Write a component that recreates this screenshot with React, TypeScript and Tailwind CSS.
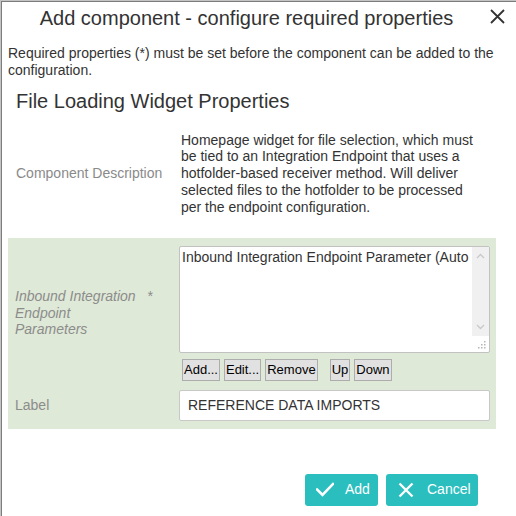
import React from "react";

function CloseIcon() {
  return (
    <svg width="15" height="15" viewBox="0 0 15 15">
      <path d="M1 1 L14 14 M14 1 L1 14" stroke="#333" strokeWidth="1.8" fill="none" />
    </svg>
  );
}

function CheckIcon() {
  return (
    <svg width="18" height="15" viewBox="0 0 18 15">
      <path d="M1 7.5 L6.5 13 L17 2" stroke="#fff" strokeWidth="2.6" fill="none" strokeLinecap="square" />
    </svg>
  );
}

function XIcon() {
  return (
    <svg width="16" height="16" viewBox="0 0 16 16">
      <path d="M1.5 1.5 L14.5 14.5 M14.5 1.5 L1.5 14.5" stroke="#fff" strokeWidth="2.4" fill="none" />
    </svg>
  );
}

function SmallBtn({ children, className = "" }: { children: React.ReactNode; className?: string }) {
  return (
    <button
      className={`h-[22px] px-[1px] border border-[#adadad] bg-[#e1e1e1] text-[13px] leading-[16px] text-black font-['Liberation_Sans'] ${className}`}
    >
      {children}
    </button>
  );
}

export default function App() {
  return (
    <div className="relative w-[516px] h-[516px] bg-white font-['Liberation_Sans'] text-[#333] shadow-[inset_1px_1px_0_#c4c4c4,inset_2px_2px_0_#7d7d7d] overflow-hidden">
      {/* Header */}
      <div className="pt-[7px] w-[493px] text-center text-[20px] leading-[23px] text-[#333]">
        Add component - configure required properties
      </div>
      <button className="absolute left-[490px] top-[9px]">
        <CloseIcon />
      </button>

      <p className="mt-[15px] px-[8px] text-[14px] leading-[16.8px]">
        Required properties (*) must be set before the component can be added to the configuration.
      </p>

      <h2 className="mt-[11px] px-[16px] text-[20px] leading-[23px]">File Loading Widget Properties</h2>

      <div className="w-[496px] pl-[8px]">
        {/* Description row */}
        <div className="flex pt-[19px] pb-[22px]">
          <div className="w-[171px] shrink-0 pl-[8px] flex items-center text-[14px] leading-[16.8px] text-[#8a8a8a]">
            Component Description
          </div>
          <div className="w-[298px] shrink-0 pl-[2px] text-[14px] leading-[16.8px] text-[#333]">
            Homepage widget for file selection, which must be tied to an Integration Endpoint that uses a
            hotfolder-based receiver method. Will deliver selected files to the hotfolder to be processed per the
            endpoint configuration.
          </div>
        </div>

        {/* Required panel */}
        <div className="bg-[#dfe9d7] pt-[8px] pb-[8px]">
          <div className="flex">
            <div className="w-[171px] shrink-0 pl-[7px] flex items-center">
              <div className="flex items-start text-[14px] leading-[16.8px] italic text-[#8c8c8c]">
                <span className="w-[126px]">Inbound Integration Endpoint Parameters</span>
                <span className="ml-[6px]">*</span>
              </div>
            </div>
            <div className="flex-1 min-w-0 pr-[6px]">
              <div className="relative h-[107px] bg-white border border-[#c2c2c2] rounded-[2px] overflow-hidden">
                <div className="pl-[2px] pt-[2px] pr-[18px] text-[14px] leading-[16.8px] text-[#333] whitespace-nowrap">
                  Inbound Integration Endpoint Parameter (Auto
                </div>
                <div className="absolute right-0 top-0 w-[17px] h-[89px] bg-[#f0f0f0] flex flex-col items-center justify-between py-[6px]">
                  <svg width="9" height="6" viewBox="0 0 9 6">
                    <path d="M1 5 L4.5 1.5 L8 5" stroke="#c8c8c8" strokeWidth="1.3" fill="none" />
                  </svg>
                  <svg width="9" height="6" viewBox="0 0 9 6">
                    <path d="M1 1 L4.5 4.5 L8 1" stroke="#c8c8c8" strokeWidth="1.3" fill="none" />
                  </svg>
                </div>
                <svg className="absolute right-[3px] bottom-[3px]" width="8" height="8" viewBox="0 0 8 8">
                  <rect x="6" y="0" width="1.5" height="1.5" fill="#b5b5b5" />
                  <rect x="3" y="3" width="1.5" height="1.5" fill="#b5b5b5" />
                  <rect x="6" y="3" width="1.5" height="1.5" fill="#b5b5b5" />
                  <rect x="0" y="6" width="1.5" height="1.5" fill="#b5b5b5" />
                  <rect x="3" y="6" width="1.5" height="1.5" fill="#b5b5b5" />
                  <rect x="6" y="6" width="1.5" height="1.5" fill="#b5b5b5" />
                </svg>
              </div>
              <div className="flex gap-[4px] mt-[6px] pl-[3px]">
                <SmallBtn>Add...</SmallBtn>
                <SmallBtn>Edit...</SmallBtn>
                <SmallBtn>Remove</SmallBtn>
                <SmallBtn className="ml-[8px]">Up</SmallBtn>
                <SmallBtn>Down</SmallBtn>
              </div>
            </div>
          </div>

          <div className="flex mt-[9px]">
            <div className="w-[171px] shrink-0 pl-[7px] flex items-center text-[14px] leading-[16.8px] text-[#8c8c8c]">
              Label
            </div>
            <div className="flex-1 min-w-0 pr-[6px]">
              <div className="h-[31px] bg-white border border-[#c8c8c8] rounded-[2px] pl-[8px] flex items-center text-[14px] text-[#333]">
                REFERENCE DATA IMPORTS
              </div>
            </div>
          </div>
        </div>
      </div>

      {/* Footer */}
      <div className="flex justify-end gap-[8px] mt-[45px] pr-[38px]">
        <button className="h-[32px] w-[73px] rounded-[3px] bg-[#2abebe] text-white text-[14px] flex items-center pl-[11px]">
          <CheckIcon />
          <span className="ml-[11px]">Add</span>
        </button>
        <button className="h-[32px] w-[92px] rounded-[3px] bg-[#2abebe] text-white text-[14px] flex items-center pl-[12px]">
          <XIcon />
          <span className="ml-[13px]">Cancel</span>
        </button>
      </div>
    </div>
  );
}
